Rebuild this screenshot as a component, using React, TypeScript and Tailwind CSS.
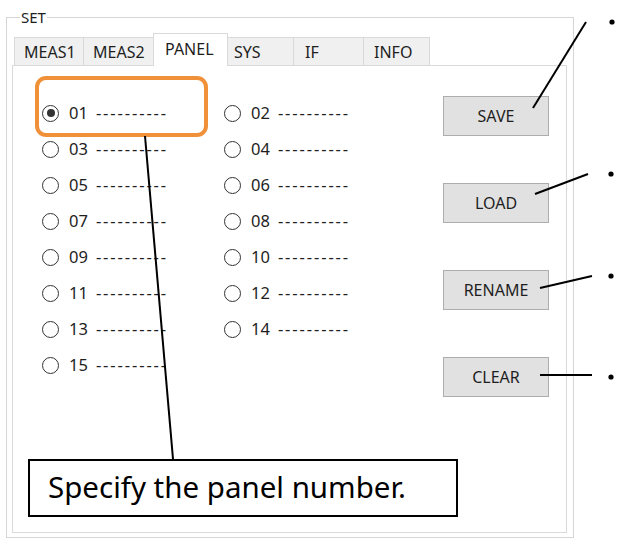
import React from "react";

const tabs = [
  { label: "MEAS1", w: "w-[70px]", pl: "pl-[9px]" },
  { label: "MEAS2", w: "w-[71px]", pl: "pl-[9px]" },
  { label: "PANEL", w: "w-[75px]", pl: "pl-[11px]", active: true },
  { label: "SYS", w: "w-[67px]", pl: "pl-[6px]" },
  { label: "IF", w: "w-[71px]", pl: "pl-[11px]" },
  { label: "INFO", w: "w-[67px]", pl: "pl-[10px]" },
];

const items = Array.from({ length: 15 }, (_, i) => String(i + 1).padStart(2, "0"));

function Radio({ checked }: { checked?: boolean }) {
  return (
    <span className="w-[17px] h-[17px] rounded-full border border-[#333] bg-white flex items-center justify-center shrink-0">
      {checked && <span className="w-[8px] h-[8px] rounded-full bg-[#333]" />}
    </span>
  );
}

export default function App() {
  return (
    <div
      className="w-[622px] h-[547px] relative bg-white overflow-hidden text-[#1e1e1e]"
      style={{ fontFamily: '"Noto Sans", "Open Sans", sans-serif' }}
    >
      {/* Group box */}
      <div className="ml-[6px] mt-[17px] w-[568px] h-[521px] border border-[#d5d5d5] relative pt-[15px] pl-[5px]">
        <span className="absolute -top-[10px] left-[13px] bg-white px-[1px] text-[15px] leading-[18px]">SET</span>
        {/* Tab row */}
        <div className="flex items-end h-[32px] ml-[2px] relative z-10">
          {tabs.map((t) => (
            <div
              key={t.label}
              className={
                t.active
                  ? `${t.w} ${t.pl} h-[33px] -mb-px -ml-px bg-white border border-b-0 border-[#d9d9d9] flex items-center pb-[3px] text-[16px]`
                  : `${t.w} ${t.pl} h-[28px] -ml-px first:ml-0 bg-[#f0f0f0] border border-b-0 border-[#d9d9d9] flex items-center text-[16px]`
              }
            >
              {t.label}
            </div>
          ))}
        </div>
        {/* Panel */}
        <div className="w-[555px] h-[468px] border border-[#d9d9d9] bg-white flex">
          <div className="pl-[29px] pt-[29px] grid grid-cols-[182px_182px] auto-rows-[36px] content-start">
            {items.map((n) => (
              <div key={n} className="flex items-center gap-[10px] text-[16.5px]">
                <Radio checked={n === "01"} />
                <span className="flex items-center">
                  <span>{n}</span>
                  <span className="ml-[8px] tracking-[1.9px]">----------</span>
                </span>
              </div>
            ))}
          </div>
          <div className="ml-auto pr-[17px] pt-[30px] flex flex-col gap-[47px]">
            {["SAVE", "LOAD", "RENAME", "CLEAR"].map((b) => (
              <div
                key={b}
                className="w-[106px] h-[40px] bg-[#e1e1e1] border border-[#adadad] flex items-center justify-center text-[16px]"
              >
                {b}
              </div>
            ))}
          </div>
        </div>
      </div>

      {/* Orange highlight */}
      <div className="absolute left-[35px] top-[76px] w-[173px] h-[61px] border-[4px] border-[#f0913a] rounded-[11px]" />

      {/* Annotation lines */}
      <svg className="absolute left-0 top-0" width="622" height="547">
        <g stroke="#000" strokeWidth="2">
          <line x1="533" y1="108" x2="586" y2="22" />
          <line x1="535" y1="194" x2="588" y2="174" />
          <line x1="540" y1="288" x2="592" y2="276" />
          <line x1="540" y1="375" x2="592" y2="375" />
          <line x1="145" y1="136" x2="173" y2="459" />
        </g>
        <g fill="#000">
          <circle cx="612" cy="22" r="2.6" />
          <circle cx="611" cy="174" r="2.6" />
          <circle cx="611" cy="276" r="2.6" />
          <circle cx="611" cy="377" r="2.6" />
        </g>
      </svg>

      {/* Callout */}
      <div
        className="absolute left-[28px] top-[459px] w-[430px] h-[58px] border-2 border-black bg-white flex items-center pl-[18px] pb-[2px] text-[29.5px] text-black"
        style={{ fontFamily: '"Noto Sans", sans-serif' }}
      >
        Specify the panel number.
      </div>
    </div>
  );
}
